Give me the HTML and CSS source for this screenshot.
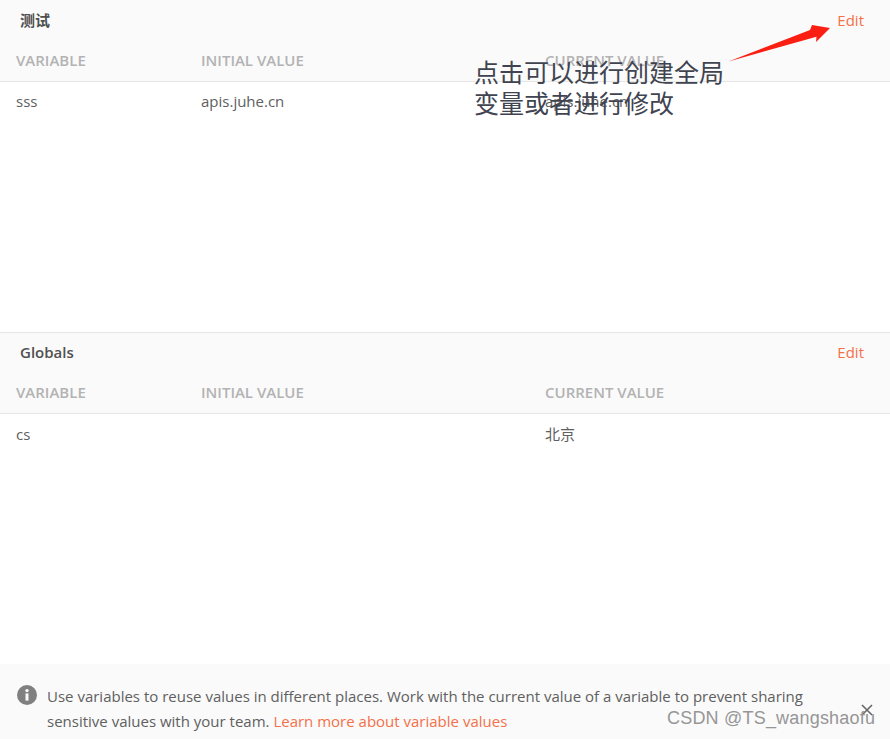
FILE: index.html
```html
<!DOCTYPE html>
<html lang="zh">
<head>
<meta charset="utf-8">
<title>Variables</title>
<link rel="stylesheet" href="styles.css">
</head>
<body>
<main class="page">
  <section class="scope">
    <header class="scope-head">
      <div class="scope-title"><h2>测试</h2><a class="link">Edit</a></div>
      <div class="cols cols-head"><span>VARIABLE</span><span>INITIAL VALUE</span><span>CURRENT VALUE</span></div>
    </header>
    <div class="cols row"><span>sss</span><span>apis.juhe.cn</span><span>apis.juhe.cn</span></div>
  </section>
  <section class="scope scope-second">
    <header class="scope-head">
      <div class="scope-title"><h2>Globals</h2><a class="link">Edit</a></div>
      <div class="cols cols-head"><span>VARIABLE</span><span>INITIAL VALUE</span><span>CURRENT VALUE</span></div>
    </header>
    <div class="cols row"><span>cs</span><span></span><span>北京</span></div>
  </section>
  <footer class="notice">
    <svg class="info" viewBox="0 0 20 20" width="20" height="20" aria-hidden="true"><circle cx="10" cy="10" r="10" fill="#808080"/><circle cx="10" cy="5.6" r="1.7" fill="#fafafa"/><rect x="8.5" y="8.4" width="3" height="7.2" fill="#fafafa"/></svg>
    <p>Use variables to reuse values in different places. Work with the current value of a variable to prevent sharing sensitive values with your team. <a class="link">Learn more about variable values</a></p>
    <svg class="close" viewBox="0 0 12 12" width="12" height="12" aria-hidden="true"><path d="M1 1L11 11M11 1L1 11" stroke="#666" stroke-width="1.6" fill="none"/></svg>
  </footer>
</main>
<div class="note">点击可以进行创建全局<br>变量或者进行修改</div>
<svg class="arrow" viewBox="0 0 110 50" width="110" height="50" aria-hidden="true"><path d="M2.5 38.5L84 7L86 2L104 5L90 19L90.5 13.7Z" fill="#fb1f13"/></svg>
<div class="watermark">CSDN @TS_wangshaofu</div>
</body>
</html>
```
FILE: styles.css
```css
* { box-sizing: border-box; }
html, body { margin: 0; height: 100%; }
body { background: #fff; font-family: "Open Sans", "Noto Sans CJK SC", sans-serif; font-size: 15px; color: #505050; overflow: hidden; position: relative; }
.page { display: flex; flex-direction: column; height: 739px; }
.scope { height: 332px; }
.scope-second { border-top: 1px solid #e6e6e6; height: 332px; }
.scope-head { background: #fafafa; border-bottom: 1px solid #e6e6e6; height: 82px; display: flex; flex-direction: column; }
.scope-second .scope-head { height: 81px; }
.scope-title { display: flex; justify-content: space-between; align-items: center; height: 40px; padding: 0 26px 1px 20px; }
.scope-second .scope-title { height: 39px; padding-bottom: 2px; }
.scope-title h2 { margin: 0; font-size: 15px; font-weight: 600; color: #505050; }
.link { color: #f4704a; }
.cols { display: grid; grid-template-columns: 185px 344px 1fr; padding-left: 16px; }
.cols-head { font-size: 15px; font-weight: 600; color: #b3b3b3; height: 41px; align-items: center; padding-bottom: 2px; }
.row { height: 40px; align-items: center; color: #606060; padding-bottom: 2px; }
.scope-second .row { padding-bottom: 1px; }
.notice { background: #fafafa; flex: 1; display: flex; align-items: flex-start; padding: 20px 15px 0 17px; position: relative; }
.info { flex: none; margin-top: 1px; }
.notice p { margin: 0 0 0 10px; width: 770px; line-height: 25px; color: #606060; }
.close { position: absolute; right: 17px; top: 40px; }
.note { position: absolute; left: 474px; top: 56px; font-size: 25px; line-height: 31px; color: #3f4450; font-family: "Noto Sans CJK SC", sans-serif; }
.arrow { position: absolute; left: 726px; top: 23px; }
.watermark { position: absolute; left: 667px; top: 708px; font-family: "Liberation Sans", sans-serif; font-size: 18px; color: #969696; letter-spacing: .2px; }
```
